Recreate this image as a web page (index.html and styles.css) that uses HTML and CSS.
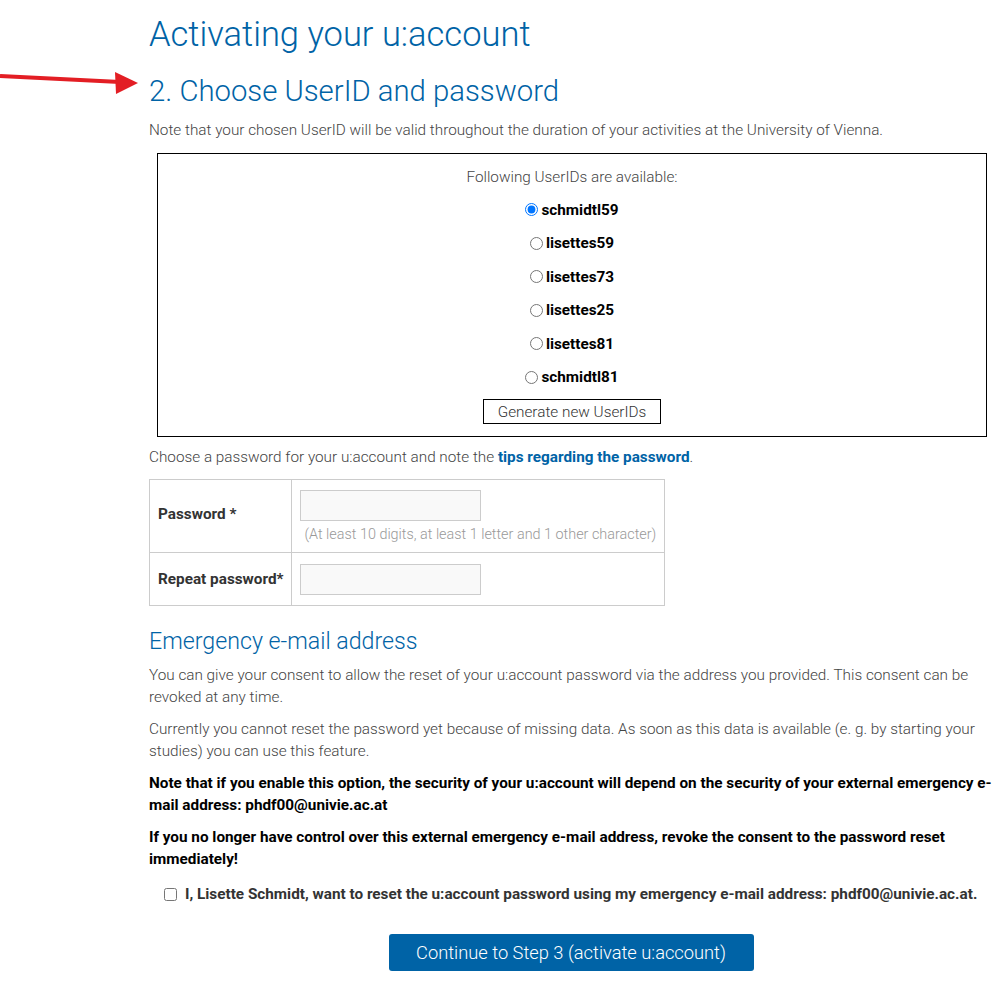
FILE: index.html
```html
<!DOCTYPE html>
<html lang="en">
<head>
    <meta charset="utf-8">
    <title>Activating your u:account</title>
    <link rel="stylesheet" href="styles.css">
</head>
<body>
    <svg class="arrow" width="140" height="30" viewBox="0 0 140 30">
        <line x1="0" y1="6" x2="120" y2="12" stroke="#e31e24" stroke-width="4"/>
        <polygon points="115,2 138,13 116,24" fill="#e31e24"/>
    </svg>

    <div class="page">
        <h1 class="title">Activating your u:account</h1>
        <h2 class="step">2. Choose UserID and password</h2>

        <p class="text">Note that your chosen UserID will be valid throughout the duration of your activities at the University of Vienna.</p>

        <div class="userids">
            <div class="userids-label">Following UserIDs are available:</div>
            <label class="userid"><input type="radio" name="uid" checked> schmidtl59</label>
            <label class="userid"><input type="radio" name="uid"> lisettes59</label>
            <label class="userid"><input type="radio" name="uid"> lisettes73</label>
            <label class="userid"><input type="radio" name="uid"> lisettes25</label>
            <label class="userid"><input type="radio" name="uid"> lisettes81</label>
            <label class="userid"><input type="radio" name="uid"> schmidtl81</label>
            <button class="btn-generate" type="button">Generate new UserIDs</button>
        </div>

        <p class="text text--tight">Choose a password for your u:account and note the <a href="#" class="link">tips regarding the password</a>.</p>

        <table class="pw-table">
            <tr class="pw-row--first">
                <th>Password *</th>
                <td>
                    <input type="password" class="pw-input">
                    <div class="hint">(At least 10 digits, at least 1 letter and 1 other character)</div>
                </td>
            </tr>
            <tr>
                <th>Repeat password*</th>
                <td><input type="password" class="pw-input"></td>
            </tr>
        </table>

        <h3 class="section">Emergency e-mail address</h3>

        <p class="text">You can give your consent to allow the reset of your u:account password via the address you provided. This consent can be revoked at any time.</p>
        <p class="text">Currently you cannot reset the password yet because of missing data. As soon as this data is available (e. g. by starting your studies) you can use this feature.</p>
        <p class="text text--strong">Note that if you enable this option, the security of your u:account will depend on the security of your external emergency e-mail address: phdf00@univie.ac.at</p>
        <p class="text text--strong">If you no longer have control over this external emergency e-mail address, revoke the consent to the password reset immediately!</p>

        <label class="consent"><input type="checkbox"> I, Lisette Schmidt, want to reset the u:account password using my emergency e-mail address: phdf00@univie.ac.at.</label>

        <div class="actions">
            <button class="btn-primary" type="button">Continue to Step 3 (activate u:account)</button>
        </div>
    </div>
</body>
</html>
```

FILE: styles.css
```css
:root {
    --ff: Roboto, 'Open Sans', sans-serif;
    --blue: #0063a6;
    --text: #444;
}

body {
    font-family: var(--ff);
    font-size: 15.3px;
    font-weight: 300;
    color: var(--text);

    margin: 0;
}

.arrow {
    position: absolute;
    left: 0;
    top: 70px;
}

.page {
    width: 848px;
    margin: 0 0 0 149px;
    padding-top: 14px;
    padding-bottom: 20px;
}

.title {
    font-size: 34.5px;
    font-weight: 300;
    line-height: 40px;
    color: var(--blue);

    margin: 0 0 19px;
}

.step {
    font-size: 29.3px;
    font-weight: 300;
    line-height: 36px;
    color: var(--blue);

    margin: 0 0 10px;
}

.section {
    font-size: 23.2px;
    font-weight: 300;
    line-height: 30px;
    color: var(--blue);

    margin: 20px 0 8px;
}

.text {
    line-height: 22px;
    margin: 0 0 10px;
}
.text--tight {
    margin: 0 0 11px;
}
.text--strong {
    font-weight: 700;
    color: #000;
}

.link {
    color: var(--blue);
    font-weight: 700;
    text-decoration: none;
}

.userids {
    border: 1px solid #000;
    margin: 12px 10px 9px 8px;
    padding: 12px 0 12px;

    display: flex;
    flex-direction: column;
    align-items: center;
    gap: 11.5px;
}
.userids-label {
    line-height: 22px;
    margin-bottom: -1px;
}
.userid {
    font-weight: 700;
    color: #000;
    line-height: 22px;

    display: flex;
    align-items: center;
}
.userid input {
    margin: 0 3px 0 0;
    width: 13px;
    height: 13px;
}

.btn-generate {
    font-family: var(--ff);
    font-size: 15.3px;
    font-weight: 300;
    color: #333;
    background: #fff;
    border: 1px solid #000;
    border-radius: 0;

    width: 178px;
    height: 25px;
    margin-top: -0.5px;
    padding: 0;
}

.pw-table {
    border-collapse: collapse;
    width: 516px;
    margin-bottom: 0;
}
.pw-table th,
.pw-table td {
    border: 1px solid #ccc;
    padding: 0 8px;
}
.pw-table th {
    font-weight: 700;
    color: #333;
    text-align: left;
    white-space: nowrap;
    width: 125px;
}
.pw-row--first th {
    padding-bottom: 5px;
}
.pw-row--first td {
    height: 68px;
    padding-top: 4px;
}
.pw-table tr:last-child td {
    height: 52px;
}

.pw-input {
    display: block;
    box-sizing: border-box;
    width: 181px;
    height: 31px;
    background: #f9f9f9;
    border: 1px solid #ccc;
    border-radius: 0;
    margin: 0;
}
.hint {
    font-size: 14.4px;
    color: #999;
    line-height: 22px;
    white-space: nowrap;
    margin: 3px 0 0 4px;
}

.consent {
    font-weight: 700;
    color: #333;
    line-height: 22px;

    display: flex;
    align-items: center;
    margin: 13px 0 0 15px;
}
.consent input {
    width: 13px;
    height: 13px;
    margin: 0 8px 0 0;
}

.actions {
    display: flex;
    justify-content: center;
    margin-top: 29px;
    padding-right: 4px;
}
.btn-primary {
    font-family: var(--ff);
    font-size: 18.3px;
    font-weight: 300;
    color: #fff;
    background: var(--blue);
    border: 0;
    border-radius: 3px;

    width: 365px;
    height: 37px;
}
```
